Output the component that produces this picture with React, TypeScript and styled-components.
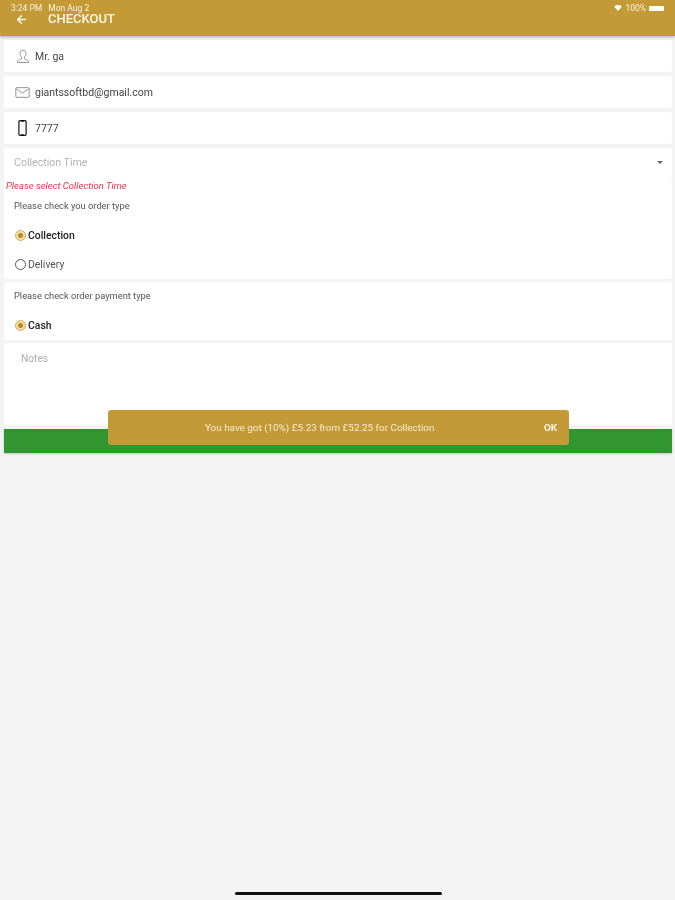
import React from 'react'
import styled, { createGlobalStyle } from 'styled-components'
import { ArrowLeft } from 'lucide-react'

const Global = createGlobalStyle`
html, body {
  margin: 0;
  padding: 0;
  background: #f4f4f4;
}
* {
  box-sizing: border-box;
}
`

const Screen = styled.div`
width: 675px;
height: 900px;
position: relative;
overflow: hidden;
background: #f4f4f4;
font-family: Roboto, "Liberation Sans", sans-serif;
filter: blur(0.6px);
`
const Header = styled.header`
height: 36px;
background: #c49a36;
box-shadow: 0 1px 3px rgba(90, 70, 20, 0.45);
padding: 4px 11px 0 11px;
color: #fff;
`
const StatusBar = styled.div`
height: 8px;
display: flex;
justify-content: space-between;
align-items: center;
font-size: 8.5px;
line-height: 8px;
color: #fbf3de;
`
const StatusGroup = styled.div`
display: flex;
align-items: center;
gap: ${(props: { $gap: number }) => props.$gap}px;
`
const Battery = styled.span`
width: 15px;
height: 5px;
border-radius: 1px;
background: #fff;
`
const TitleRow = styled.div`
display: flex;
align-items: center;
gap: 20px;
padding-left: 4px;
height: 14px;
`
const Title = styled.h1`
margin: 0;
font-size: 13px;
line-height: 14px;
font-weight: 500;
color: #fdf8ea;
`
const Form = styled.main`
display: flex;
flex-direction: column;
padding: 4px 3px 0 4px;
`
const Card = styled.div`
background: #fff;
border-radius: 3px;
`
const FieldRow = styled(Card)`
height: 32px;
margin-bottom: 4px;
display: flex;
align-items: center;
padding-left: 11px;
font-size: 10.5px;
color: #444;
`
const IconSlot = styled.span`
width: 15px;
display: flex;
justify-content: center;
align-items: center;
margin-right: 5px;
`
const SelectRow = styled.div`
height: 31px;
background: #fff;
display: flex;
align-items: center;
justify-content: space-between;
padding: 0 9px 2px 10px;
font-size: 10.6px;
color: #b3b3b3;
`
const Caret = styled.span`
width: 0;
height: 0;
border-left: 3px solid transparent;
border-right: 3px solid transparent;
border-top: 3px solid #666;
`
const OrderCard = styled(Card)`
height: 100px;
margin-bottom: 3px;
`
const ErrorText = styled.div`
height: 13px;
margin-bottom: 7px;
padding-left: 2px;
font-size: 9.5px;
line-height: 13px;
font-style: italic;
color: #f0304f;
`
const Question = styled.div`
margin-bottom: 8px;
padding-left: 10px;
font-size: 9.3px;
line-height: 14px;
color: #555;
`
const RadioRow = styled.div`
height: 29px;
display: flex;
align-items: center;
padding-left: 11px;
gap: 2px;
font-size: 10.4px;
color: ${(props: { $on?: boolean }) => (props.$on ? '#222' : '#555')};
font-weight: ${(props: { $on?: boolean }) => (props.$on ? 500 : 400)};
`
const Radio = styled.span<{ $on?: boolean }>`
width: 11px;
height: 11px;
border-radius: 50%;
display: flex;
align-items: center;
justify-content: center;
border: 1px solid ${(props) => (props.$on ? '#d9ae4c' : '#555')};
background: ${(props) => (props.$on ? '#f3dfae' : '#fff')};

&::after {
  content: "";
  width: 5px;
  height: 5px;
  border-radius: 50%;
  background: ${(props) => (props.$on ? '#b98a24' : 'transparent')};
}
`
const PaymentCard = styled(Card)`
height: 58px;
margin-bottom: 3px;
padding-top: 7px;
`
const NotesCard = styled(Card)`
height: 82px;
padding: 9px 17px;
font-size: 10.2px;
line-height: 13px;
color: #adadad;
`
const SubmitBar = styled.div`
height: 24px;
margin-top: 4px;
background: #31962f;
box-shadow: 0 1px 2px rgba(0, 0, 0, 0.2);
`
const Toast = styled.div`
position: absolute;
left: 108px;
top: 410px;
width: 461px;
height: 35px;
background: #c49a36;
border-radius: 3px;
display: flex;
align-items: center;
padding: 0 12px 0 97px;
font-size: 9.9px;
color: #f6ecd2;
`
const ToastText = styled.span`
flex: 1;
`
const ToastAction = styled.span`
font-weight: 700;
color: #fbf5e4;
`
const HomeIndicator = styled.div`
position: absolute;
left: 235px;
top: 892px;
width: 207px;
height: 3px;
border-radius: 2px;
background: #111;
`

const UserIcon = () => (
  <svg width="14" height="15" viewBox="0 0 14 15" fill="none" stroke="#8a8a8a" strokeWidth="0.9">
    <path d="M7 1.2c-1.9 0-3 1.4-3 3.2 0 1.500.7 2.900 1.600 3.600v1.300c0 .6-.5.9-1.200 1.200-1.300.5-2.900 1-2.900 2v1h11v-1c0-1-1.600-1.500-2.900-2-.7-.3-1.200-.6-1.200-1.200V8c.9-.7 1.600-2.100 1.600-3.600 0-1.800-1.100-3.200-3-3.200z" />
  </svg>
)

const MailIcon = () => (
  <svg width="15" height="11" viewBox="0 0 16 12" fill="none" stroke="#8a8a8a" strokeWidth="1">
    <rect x="0.7" y="0.7" width="14.600" height="10.600" rx="1.200" />
    <path d="M1.200 2l6.800 4.600L14.800 2" />
  </svg>
)

const PhoneIcon = () => (
  <svg width="9" height="18" viewBox="0 0 10 18" fill="none">
    <rect x="1" y="0.800" width="8" height="16.400" rx="1.300" stroke="#111" strokeWidth="1.300" />
    <path d="M3.500 1.200h3M3.500 16.800h3" stroke="#111" strokeWidth="1.500" />
  </svg>
)

const WifiIcon = () => (
  <svg width="8" height="6" viewBox="0 0 8 6">
    <path d="M0 1.600C2.300-.5 5.700-.5 8 1.600L4 6z" fill="#fff" />
  </svg>
)

const App = () => {
  return (
    <Screen>
      <Global />
      <Header>
        <StatusBar>
          <StatusGroup $gap={6}>
            <span>3:24 PM</span>
            <span>Mon Aug 2</span>
          </StatusGroup>
          <StatusGroup $gap={3}>
            <WifiIcon />
            <span>100%</span>
            <Battery />
          </StatusGroup>
        </StatusBar>
        <TitleRow>
          <ArrowLeft size={13} color="#fff" strokeWidth={2.4} />
          <Title>CHECKOUT</Title>
        </TitleRow>
      </Header>
      <Form>
        <FieldRow>
          <IconSlot><UserIcon /></IconSlot>
          Mr. ga
        </FieldRow>
        <FieldRow>
          <IconSlot><MailIcon /></IconSlot>
          giantssoftbd@gmail.com
        </FieldRow>
        <FieldRow>
          <IconSlot><PhoneIcon /></IconSlot>
          7777
        </FieldRow>
        <SelectRow>
          Collection Time
          <Caret />
        </SelectRow>
        <OrderCard>
          <ErrorText>Please select Collection Time</ErrorText>
          <Question>Please check you order type</Question>
          <RadioRow $on><Radio $on />Collection</RadioRow>
          <RadioRow><Radio />Delivery</RadioRow>
        </OrderCard>
        <PaymentCard>
          <Question>Please check order payment type</Question>
          <RadioRow $on><Radio $on />Cash</RadioRow>
        </PaymentCard>
        <NotesCard>Notes</NotesCard>
        <SubmitBar />
      </Form>
      <Toast>
        <ToastText>You have got (10%) £5.23 from £52.25 for Collection</ToastText>
        <ToastAction>OK</ToastAction>
      </Toast>
      <HomeIndicator />
    </Screen>
  )
}

export default App
